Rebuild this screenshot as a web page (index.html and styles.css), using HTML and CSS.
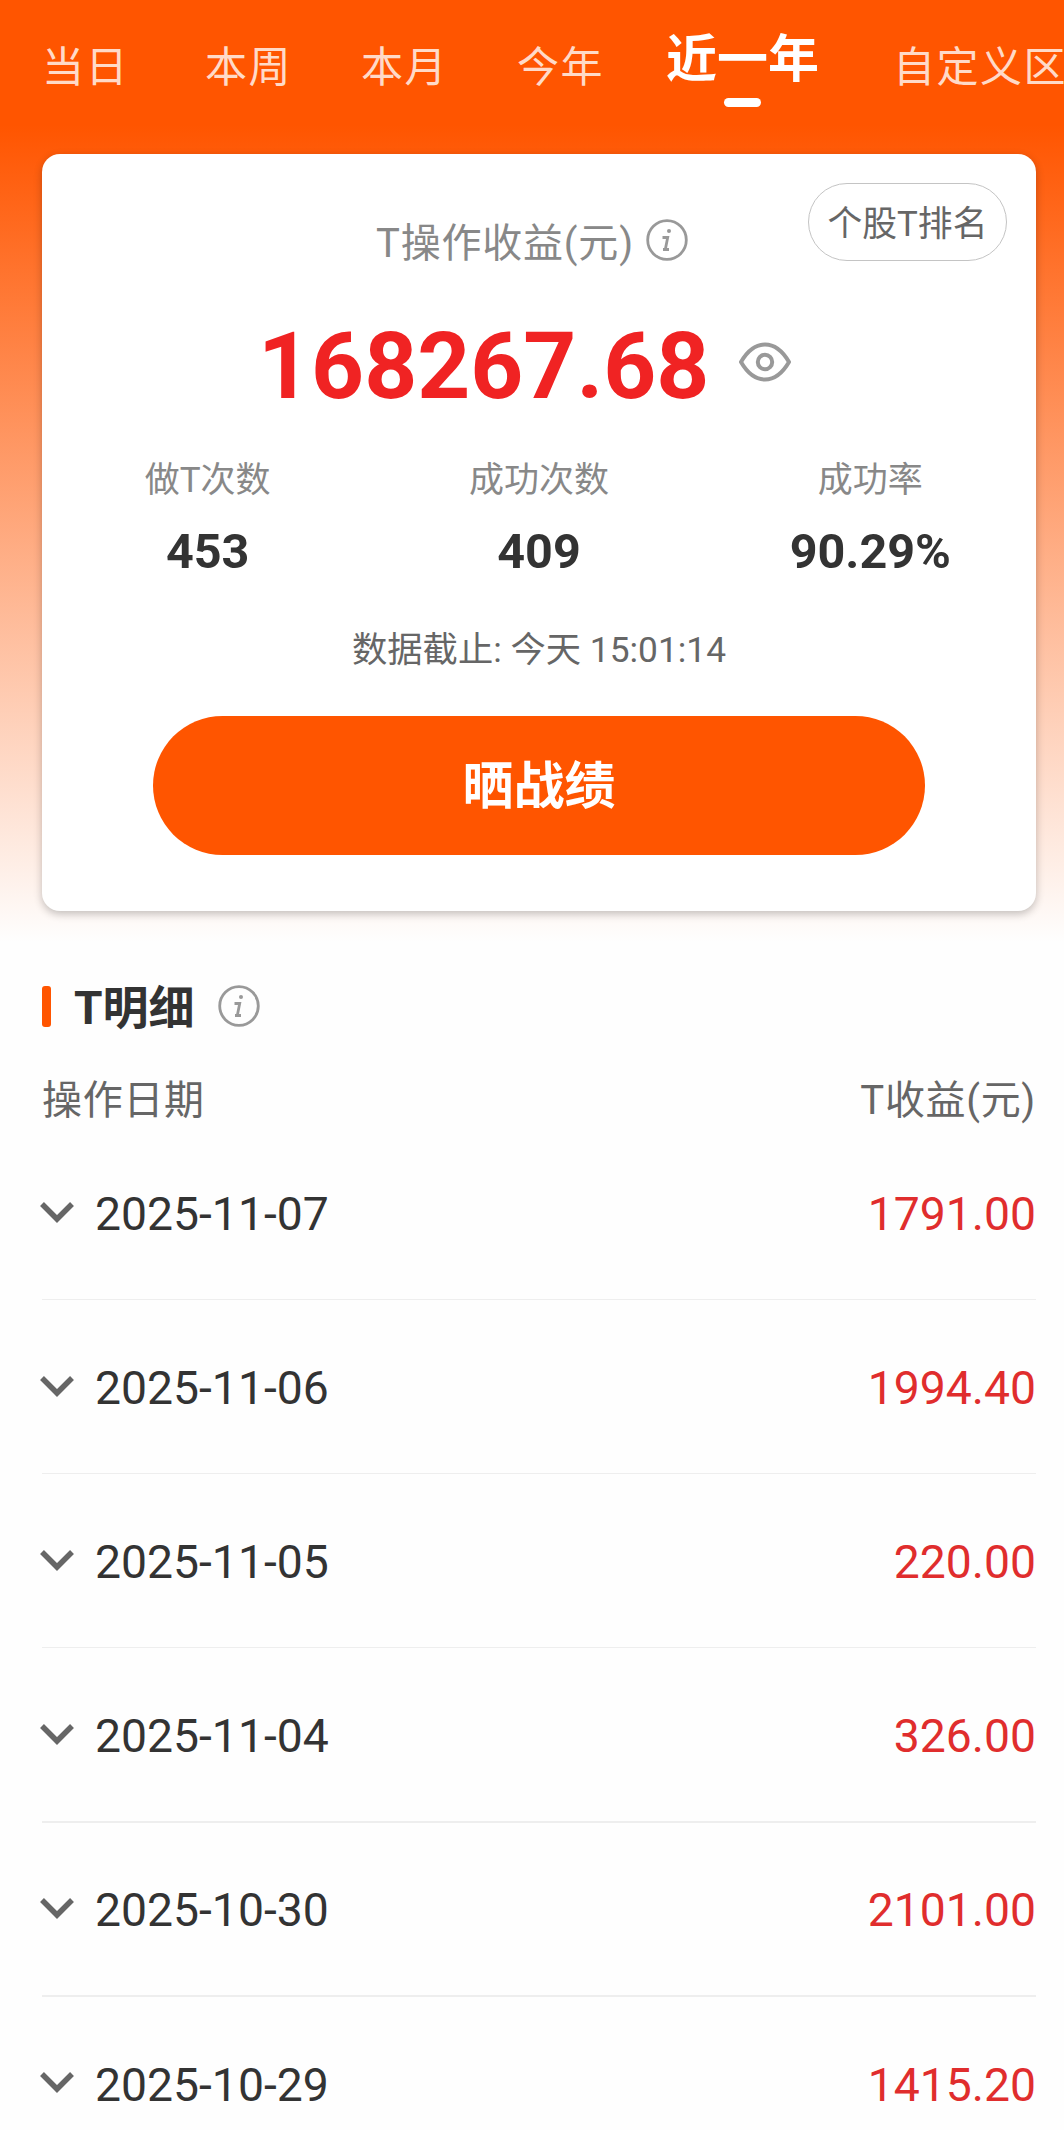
FILE: index.html
```html
<!DOCTYPE html>
<html lang="zh-CN">
<head>
	<meta charset="utf-8" />
	<title>T操作收益</title>
	<link rel="stylesheet" href="styles.css">
</head>
<body>

	<div class="top">
		<div class="tabs">
			<div class="tab tab_first">当日</div>
			<div class="tab">本周</div>
			<div class="tab">本月</div>
			<div class="tab">今年</div>
			<div class="tab active">近一年</div>
			<div class="tab tab_last">自定义区间</div>
		</div>

		<div class="card">
			<div class="rank_button">个股T排名</div>
			<div class="card_title">
				<span>T操作收益(元)</span>
				<svg class="info" viewBox="0 0 42 42">
					<circle cx="21" cy="21" r="19.3"/>
					<circle class="dot" cx="23" cy="12" r="2"/>
					<path d="M16.5 18.5h5.2l-2.4 12M17 30.5h6"/>
				</svg>
			</div>
			<div class="total">
				<span>168267.68</span>
				<svg class="eye" viewBox="0 0 52 40">
					<path d="M2 20C9 8 17 2.5 26 2.5s17 5.5 24 17.5c-7 12-15 17.5-24 17.5S9 32 2 20z"/>
					<circle cx="26" cy="20" r="7.2"/>
				</svg>
			</div>
			<div class="stats">
				<div class="stat"><p class="label">做T次数</p><p class="value">453</p></div>
				<div class="stat"><p class="label">成功次数</p><p class="value">409</p></div>
				<div class="stat"><p class="label">成功率</p><p class="value">90.29%</p></div>
			</div>
			<div class="deadline">数据截止: 今天 15:01:14</div>
			<div class="share_button">晒战绩</div>
		</div>
	</div>

	<div class="detail">
		<div class="detail_title">
			<i class="bar"></i>
			<h2>T明细</h2>
			<svg class="info" viewBox="0 0 42 42">
				<circle cx="21" cy="21" r="19.3"/>
				<circle class="dot" cx="23" cy="12" r="2"/>
				<path d="M16.5 18.5h5.2l-2.4 12M17 30.5h6"/>
			</svg>
		</div>
		<div class="list_head"><span>操作日期</span><span>T收益(元)</span></div>
		<div class="row">
			<svg class="arrow" viewBox="0 0 34 22"><path d="M2 2l15 15L32 2"/></svg>
			<span class="date">2025-11-07</span><span class="money">1791.00</span>
		</div>
		<div class="row">
			<svg class="arrow" viewBox="0 0 34 22"><path d="M2 2l15 15L32 2"/></svg>
			<span class="date">2025-11-06</span><span class="money">1994.40</span>
		</div>
		<div class="row">
			<svg class="arrow" viewBox="0 0 34 22"><path d="M2 2l15 15L32 2"/></svg>
			<span class="date">2025-11-05</span><span class="money">220.00</span>
		</div>
		<div class="row thick">
			<svg class="arrow" viewBox="0 0 34 22"><path d="M2 2l15 15L32 2"/></svg>
			<span class="date">2025-11-04</span><span class="money">326.00</span>
		</div>
		<div class="row thick">
			<svg class="arrow" viewBox="0 0 34 22"><path d="M2 2l15 15L32 2"/></svg>
			<span class="date">2025-10-30</span><span class="money">2101.00</span>
		</div>
		<div class="row">
			<svg class="arrow" viewBox="0 0 34 22"><path d="M2 2l15 15L32 2"/></svg>
			<span class="date">2025-10-29</span><span class="money">1415.20</span>
		</div>
	</div>

</body>
</html>
```
FILE: styles.css
```css
* {box-sizing: border-box; margin: 0; padding: 0;}

body {
	height: 2130px;
	overflow: hidden;
	background: #fefefe;
	color: #333;
	font-family: Roboto, "Noto Sans CJK SC", sans-serif;
}

.top {
	height: 942px;
	background: linear-gradient(#ff5500 125px, #fefefe 942px);
}

/* 顶部时间标签 */
.tabs {
	display: flex;
	gap: 69px;
	height: 154px;
	padding-left: 42px;
	overflow: hidden;
}
.tab {
	flex: none;
	padding-top: 38px;
	line-height: 60px;
	font-size: 42px;
	letter-spacing: 1.5px;
	color: #ffdac8;
}
.tab_first {margin-right: 7px;}
.tab_last {margin-left: 5px;}
.tab.active {
	display: flex;
	flex-direction: column;
	align-items: center;
	margin-left: -7px;
	padding-top: 30px;
	font-size: 51px;
	font-weight: bold;
	letter-spacing: 0;
	color: #fff;
}
.tab.active::after {
	content: "";
	width: 37px;
	height: 9px;
	margin-top: 8px;
	border-radius: 5px;
	background: #fff;
}

.card {
	position: relative;
	height: 757px;
	margin: 0 28px 0 42px;
	padding-top: 58px;
	border-radius: 18px;
	background: #fff;
	box-shadow: 0 3px 8px rgba(0,0,0,.24);
}
.rank_button {
	position: absolute;
	top: 29px;
	right: 29px;
	width: 199px;
	height: 78px;
	border: 1px solid #c4c4c4;
	border-radius: 39px;
	line-height: 80px;
	text-align: center;
	font-size: 34.8px;
	color: #666;
}
.card_title {
	display: flex;
	align-items: center;
	height: 56px;
	padding-left: 334px;
	font-size: 40px;
	letter-spacing: .8px;
	color: #888;
}
.card_title .info {margin-left: 12px;}

.info {
	width: 42px;
	height: 42px;
	fill: none;
	stroke: #999;
	stroke-width: 2.8;
}
.info .dot {fill: #999; stroke: none;}

.total {
	display: flex;
	align-items: center;
	height: 100px;
	margin-top: 49px;
	padding-left: 216px;
	font-size: 92.5px;
	line-height: 100px;
	font-weight: bold;
	color: #f02323;
}
.eye {
	width: 52px;
	height: 40px;
	margin: 0 0 10px 30px;
	fill: none;
	stroke: #999;
	stroke-width: 4;
}

.stats {display: flex; margin-top: 39px;}
.stat {flex: 1; text-align: center;}
.label {
	line-height: 50px;
	font-size: 35px;
	color: #888;
}
.value {
	margin-top: 16px;
	line-height: 60px;
	font-size: 48.5px;
	font-weight: bold;
}

.deadline {
	margin-top: 43px;
	line-height: 50px;
	text-align: center;
	font-size: 35.3px;
	color: #666;
}
.share_button {
	width: 772px;
	height: 139px;
	margin: 41px auto 0;
	border-radius: 70px;
	background: #ff5500;
	line-height: 141px;
	text-align: center;
	font-size: 51px;
	font-weight: bold;
	color: #fff;
}

/* T明细列表 */
.detail {padding: 33px 28px 0 42px;}
.detail_title {
	display: flex;
	align-items: center;
	height: 62px;
}
.bar {
	width: 9px;
	height: 41px;
	border-radius: 3px;
	background: #ff5500;
}
h2 {
	margin: 0 23px;
	padding-top: 4px;
	font-size: 46px;
	line-height: 60px;
}
.list_head {
	display: flex;
	justify-content: space-between;
	margin: 34px 0 -5px;
	line-height: 60px;
	font-size: 40px;
	letter-spacing: .7px;
	color: #666;
}
.row {
	display: flex;
	align-items: center;
	height: 174.17px;
	padding-top: 1px;
	border-bottom: 1px solid #eee;
	font-size: 46.3px;
}
.row.thick {border-bottom-width: 2px;}
.arrow {
	width: 34px;
	height: 22px;
	margin: 0 0 1px -2px;
	fill: none;
	stroke: #666;
	stroke-width: 5.5;
}
.date {margin-left: 21px; padding-top: 2px;}
.money {margin-left: auto; padding-top: 2px; color: #e02d2d;}
```
